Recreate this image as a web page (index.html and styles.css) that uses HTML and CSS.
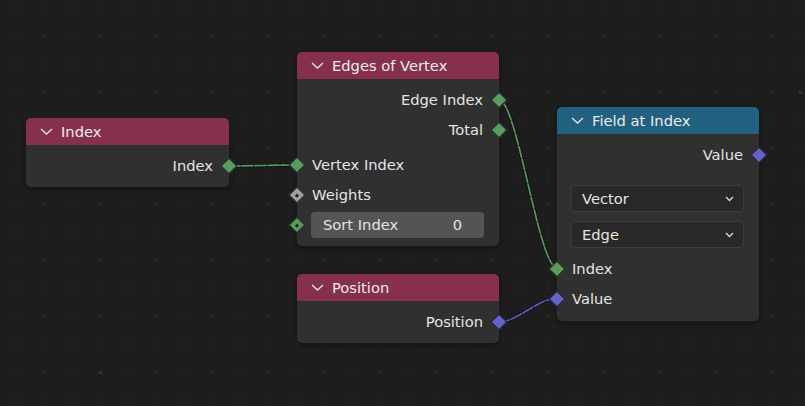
FILE: index.html
```html
<!DOCTYPE html>
<html>
<head>
<meta charset="utf-8">
<link rel="stylesheet" href="styles.css">
</head>
<body>
<div class="canvas">
  <svg class="grid" width="805" height="406" viewBox="0 0 805 406">
    <defs>
      <pattern id="dots" x="15" y="7" width="28" height="28" patternUnits="userSpaceOnUse">
        <rect x="0" y="0" width="2" height="2" fill="#2c2c2c"/>
      </pattern>
    </defs>
    <rect width="805" height="406" fill="url(#dots)"/>
    <rect x="99" y="371" width="3" height="3" fill="#333"/>
    <rect x="799" y="91" width="3" height="3" fill="#333"/>
    <g fill="none" stroke-linecap="round">
      <path class="wire-bg" d="M229 166 C247 166 279 165 297 165"/>
      <path class="wire-int" d="M229 166 C247 166 279 165 297 165"/>
      <path class="wire-bg" d="M499 100 C517 100 539 268 557 268"/>
      <path class="wire-int" d="M499 100 C517 100 539 268 557 268"/>
      <path class="wire-bg" d="M499 322 C517 322 539 298 557 298"/>
      <path class="wire-vec" d="M499 322 C517 322 539 298 557 298"/>
    </g>
  </svg>

  <div class="node n-index">
    <div class="header red">
      <svg class="chev" width="13" height="7" viewBox="0 0 13 7"><polyline points="1,1 6.5,6 12,1"/></svg>
      <span>Index</span>
    </div>
    <div class="body">
      <div class="row out"><span>Index</span><i class="sock out int"></i></div>
    </div>
  </div>

  <div class="node n-edges">
    <div class="header red">
      <svg class="chev" width="13" height="7" viewBox="0 0 13 7"><polyline points="1,1 6.5,6 12,1"/></svg>
      <span>Edges of Vertex</span>
    </div>
    <div class="body">
      <div class="row out"><span>Edge Index</span><i class="sock out int"></i></div>
      <div class="row out"><span>Total</span><i class="sock out int"></i></div>
      <div class="row in gap"><i class="sock in int"></i><span>Vertex Index</span></div>
      <div class="row in"><i class="sock in float dot"></i><span>Weights</span></div>
      <div class="row in"><i class="sock in int dot"></i>
        <div class="numfield"><span>Sort Index</span><span>0</span></div>
      </div>
    </div>
  </div>

  <div class="node n-field">
    <div class="header blue">
      <svg class="chev" width="13" height="7" viewBox="0 0 13 7"><polyline points="1,1 6.5,6 12,1"/></svg>
      <span>Field at Index</span>
    </div>
    <div class="body">
      <div class="row out"><span>Value</span><i class="sock out vec"></i></div>
      <div class="dropdown first"><span>Vector</span><svg width="9" height="6" viewBox="0 0 9 6"><polyline points="1,1 4.5,4.5 8,1"/></svg></div>
      <div class="dropdown"><span>Edge</span><svg width="9" height="6" viewBox="0 0 9 6"><polyline points="1,1 4.5,4.5 8,1"/></svg></div>
      <div class="row in after-dd"><i class="sock in int"></i><span>Index</span></div>
      <div class="row in"><i class="sock in vec"></i><span>Value</span></div>
    </div>
  </div>

  <div class="node n-pos">
    <div class="header red">
      <svg class="chev" width="13" height="7" viewBox="0 0 13 7"><polyline points="1,1 6.5,6 12,1"/></svg>
      <span>Position</span>
    </div>
    <div class="body">
      <div class="row out"><span>Position</span><i class="sock out vec"></i></div>
    </div>
  </div>
</div>
</body>
</html>
```
FILE: styles.css
```css
html, body {
  margin: 0;
  padding: 0;
  background: #1d1d1d;
}
body {
  width: 805px;
  height: 406px;
  overflow: hidden;
  font-family: "DejaVu Sans", "Liberation Sans", sans-serif;
  font-size: 14.7px;
  color: #e4e4e4;
}
.canvas {
  position: relative;
  width: 805px;
  height: 406px;
}
.grid {
  position: absolute;
  left: 0;
  top: 0;
  z-index: 0;
}
.wire-bg {
  stroke: #141414;
  stroke-width: 3.6;
}
.wire-int {
  stroke: #5a965c;
  stroke-width: 1.7;
  stroke-dasharray: 11 2;
}
.wire-vec {
  stroke: #5c5cc0;
  stroke-width: 1.7;
  stroke-dasharray: 11 2;
}

.node {
  position: absolute;
  z-index: 1;
  width: 202px;
  background: #303030;
  border-radius: 5px;
  box-shadow: 0 0 0 1px #191919, 0 2px 5px rgba(0, 0, 0, 0.45);
}
.n-index { left: 26px; top: 118px; width: 203px; }
.n-edges { left: 297px; top: 52px; }
.n-field { left: 557px; top: 107px; }
.n-pos   { left: 297px; top: 274px; }

.header {
  height: 27px;
  display: flex;
  align-items: center;
  padding-left: 14px;
  border-radius: 5px 5px 0 0;
  color: #ececec;
}
.header.red { background: #86304d; }
.header.blue { background: #21607f; }
.chev {
  margin-right: 8px;
  fill: none;
  stroke: #e6e6e6;
  stroke-width: 1.3;
}
.body {
  padding: 6px 0 6px;
}
.n-field .body { padding-bottom: 7px; }
.row {
  position: relative;
  height: 30px;
  display: flex;
  align-items: center;
  line-height: 30px;
}
.row.out {
  justify-content: flex-end;
  padding-right: 16px;
}
.row.in {
  padding-left: 15px;
}
.row.gap { margin-top: 5px; }
.row.after-dd { margin-top: 6px; }

.sock {
  position: absolute;
  top: 50%;
  width: 10px;
  height: 10px;
  border: 1px solid #1b1b1b;
  transform: translate(-50%, -50%) rotate(45deg);
  box-sizing: content-box;
}
.sock.out { left: 100%; }
.sock.in { left: 0; }
.sock.int { background: #5d9a5f; }
.sock.vec { background: #6464c8; }
.sock.float { background: #a1a1a1; }
.sock.dot::after {
  content: "";
  position: absolute;
  left: 3.5px;
  top: 3.5px;
  width: 3px;
  height: 3px;
  background: #222;
}

.numfield {
  flex: 1;
  margin-right: 15px;
  margin-left: -1px;
  height: 26px;
  background: #545454;
  border-radius: 4px;
  display: flex;
  align-items: center;
  justify-content: space-between;
  padding: 0 22px 0 12px;
  line-height: 26px;
}

.dropdown {
  height: 25px;
  margin: 9px 15px 0 14px;
  background: #282828;
  border: 1px solid #3b3b3b;
  border-radius: 4px;
  display: flex;
  align-items: center;
  justify-content: space-between;
  padding: 0 9px 0 10px;
}
.dropdown.first { margin-top: 15px; }
.dropdown svg {
  fill: none;
  stroke: #dcdcdc;
  stroke-width: 1.3;
}
```
